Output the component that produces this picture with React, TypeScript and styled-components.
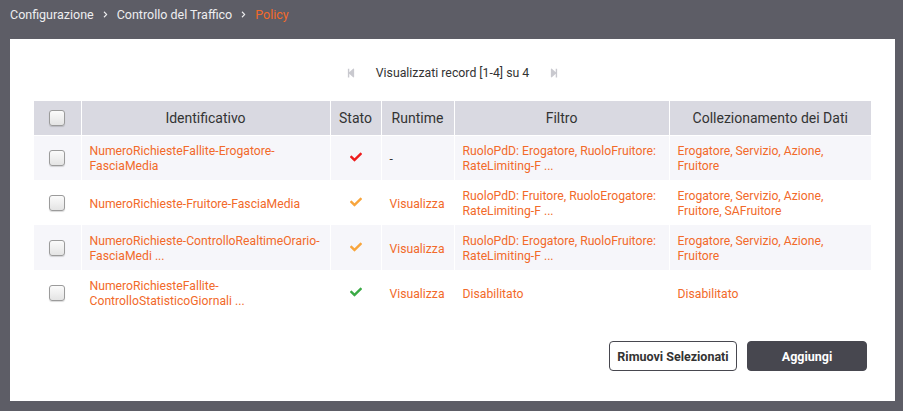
import React from 'react';
import styled, { createGlobalStyle } from 'styled-components';
import { FaCheck, FaStepBackward, FaStepForward, FaChevronRight } from 'react-icons/fa';

type Policy = {
  id: string;
  status: 'red' | 'orange' | 'green';
  runtime: string | null;
  filter: string;
  data: string;
};

const policies: Policy[] = [
  {
    id: 'NumeroRichiesteFallite-Erogatore-FasciaMedia',
    status: 'red',
    runtime: null,
    filter: 'RuoloPdD: Erogatore, RuoloFruitore: RateLimiting-F ...',
    data: 'Erogatore, Servizio, Azione, Fruitore',
  },
  {
    id: 'NumeroRichieste-Fruitore-FasciaMedia',
    status: 'orange',
    runtime: 'Visualizza',
    filter: 'RuoloPdD: Fruitore, RuoloErogatore: RateLimiting-F ...',
    data: 'Erogatore, Servizio, Azione, Fruitore, SAFruitore',
  },
  {
    id: 'NumeroRichieste-ControlloRealtimeOrario-FasciaMedi ...',
    status: 'orange',
    runtime: 'Visualizza',
    filter: 'RuoloPdD: Erogatore, RuoloFruitore: RateLimiting-F ...',
    data: 'Erogatore, Servizio, Azione, Fruitore',
  },
  {
    id: 'NumeroRichiesteFallite-ControlloStatisticoGiornali ...',
    status: 'green',
    runtime: 'Visualizza',
    filter: 'Disabilitato',
    data: 'Disabilitato',
  },
];

const statusColors = {
  red: '#ee1c1c',
  orange: '#f8a53c',
  green: '#3aaa45',
};

const GlobalStyle = createGlobalStyle`
  body {
    margin: 0;
    background: #5d5d66;
    font-family: Roboto, "Liberation Sans", sans-serif;
  }
`;

const Page = styled.div`
  width: 903px;
  height: 411px;
  display: flex;
  flex-direction: column;
  box-sizing: border-box;
  padding: 0 8px 10px 10px;
`;

const Breadcrumb = styled.nav`
  height: 39px;
  display: flex;
  align-items: center;
  gap: 8px;
  padding-bottom: 10px;
  box-sizing: border-box;
  font-size: 12.5px;
  color: #eeeef0;
`;

const Crumb = styled.span<{ $active?: boolean }>`
  color: ${(p) => (p.$active ? '#f26a2a' : '#eeeef0')};
`;

const Sep = styled.span`
  display: flex;
  font-size: 7px;
  color: #eeeef0;
`;

const Panel = styled.main`
  flex: 1;
  background: #fff;
  padding: 24px 24px 0 24px;
  box-sizing: border-box;
`;

const Pager = styled.div`
  height: 18px;
  display: flex;
  justify-content: center;
  align-items: center;
  gap: 20px;
  margin-top: 1px;
  margin-bottom: 19px;
  font-size: 12.3px;
  color: #333;
`;

const PagerIcon = styled.span`
  display: flex;
  color: #c9c9cf;
  font-size: 10px;
`;

const Table = styled.table`
  width: 837px;
  table-layout: fixed;
  border-collapse: collapse;
`;

const HeadCell = styled.th<{ $w: number }>`
  box-sizing: border-box;
  width: ${(p) => p.$w}px;
  height: 34px;
  padding: 0 8px;
  background: #d9d9e1;
  border-right: 1px solid #fff;
  border-bottom: 1px solid #fff;
  font-size: 14px;
  font-weight: normal;
  color: #333;
  text-align: center;
  &:last-child {
    border-right: none;
  }
`;

const Row = styled.tr`
  &:nth-child(odd) {
    background: #f6f6fa;
  }
`;

const Cell = styled.td<{ $center?: boolean }>`
  box-sizing: border-box;
  height: 45px;
  padding: 3px 8px 0;
  border-right: 1px solid #fff;
  font-size: 12.2px;
  line-height: 15px;
  color: #f26a2a;
  text-align: ${(p) => (p.$center ? 'center' : 'left')};
  vertical-align: middle;
  &:last-child {
    border-right: none;
  }
`;

const Dash = styled.span`
  color: #333;
`;

const Checkbox = styled.span`
  display: inline-block;
  width: 14px;
  height: 14px;
  border: 1px solid #9b9b9b;
  border-radius: 3px;
  background: linear-gradient(#fbfbfb, #e4e4e4);
  box-shadow: 0 1px 1px rgba(0, 0, 0, 0.15);
  vertical-align: middle;
`;

const RowCheckbox = styled(Checkbox)`
  margin-top: -3px;
`;

const StatusIcon = styled.span<{ $color: string }>`
  display: inline-flex;
  color: ${(p) => p.$color};
  font-size: 12px;
  margin-top: -6px;
`;

const Actions = styled.div`
  display: flex;
  justify-content: flex-end;
  gap: 10px;
  margin-top: 26px;
  padding-right: 4px;
`;

const Button = styled.button<{ $primary?: boolean }>`
  height: 30px;
  width: ${(p) => (p.$primary ? '120px' : '128px')};
  padding: 0;
  border-radius: 4px;
  border: 1px solid #47474f;
  background: ${(p) => (p.$primary ? '#47474f' : '#fff')};
  color: ${(p) => (p.$primary ? '#fff' : '#333')};
  font-family: Roboto, "Liberation Sans", sans-serif;
  font-size: 12.5px;
  font-weight: bold;
`;

export default function App() {
  return (
    <>
      <GlobalStyle />
      <Page>
        <Breadcrumb>
          <Crumb>Configurazione</Crumb>
          <Sep>
            <FaChevronRight />
          </Sep>
          <Crumb>Controllo del Traffico</Crumb>
          <Sep>
            <FaChevronRight />
          </Sep>
          <Crumb $active>Policy</Crumb>
        </Breadcrumb>
        <Panel>
          <Pager>
            <PagerIcon>
              <FaStepBackward />
            </PagerIcon>
            <span>Visualizzati record [1-4] su 4</span>
            <PagerIcon>
              <FaStepForward />
            </PagerIcon>
          </Pager>
          <Table>
            <thead>
              <tr>
                <HeadCell $w={47}>
                  <Checkbox />
                </HeadCell>
                <HeadCell $w={249}>Identificativo</HeadCell>
                <HeadCell $w={51}>Stato</HeadCell>
                <HeadCell $w={73}>Runtime</HeadCell>
                <HeadCell $w={215}>Filtro</HeadCell>
                <HeadCell $w={202}>Collezionamento dei Dati</HeadCell>
              </tr>
            </thead>
            <tbody>
              {policies.map((p) => (
                <Row key={p.id}>
                  <Cell $center>
                    <RowCheckbox />
                  </Cell>
                  <Cell>{p.id}</Cell>
                  <Cell $center>
                    <StatusIcon $color={statusColors[p.status]}>
                      <FaCheck />
                    </StatusIcon>
                  </Cell>
                  <Cell>{p.runtime ?? <Dash>-</Dash>}</Cell>
                  <Cell>{p.filter}</Cell>
                  <Cell>{p.data}</Cell>
                </Row>
              ))}
            </tbody>
          </Table>
          <Actions>
            <Button>Rimuovi Selezionati</Button>
            <Button $primary>Aggiungi</Button>
          </Actions>
        </Panel>
      </Page>
    </>
  );
}
